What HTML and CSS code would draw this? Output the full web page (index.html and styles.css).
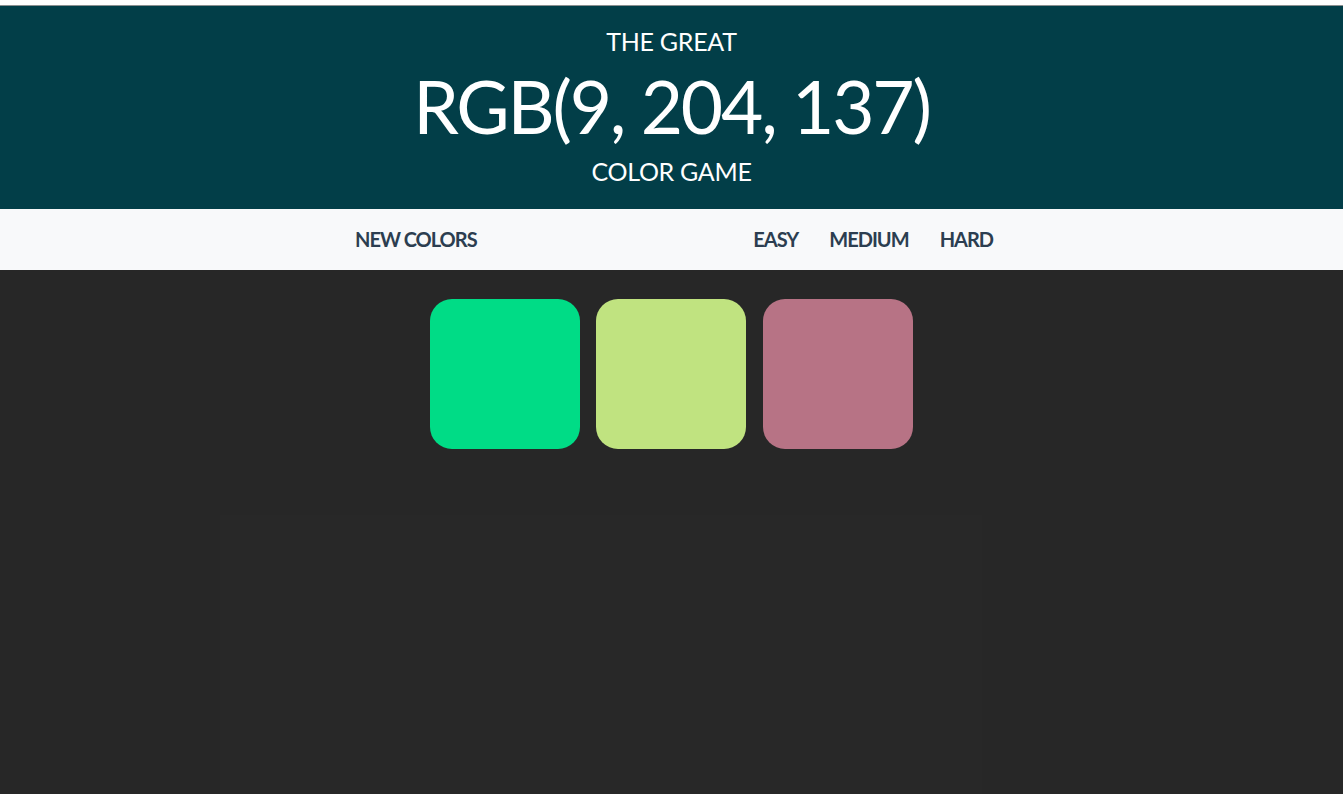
FILE: index.html
```html
<!DOCTYPE html>
<html>
<head>
<meta charset="utf-8">
<link rel="stylesheet" href="styles.css">
</head>
<body>
<div class="page">
  <header class="hero">
    <div class="small">THE GREAT</div>
    <div class="big">RGB(9, 204, 137)</div>
    <div class="small">COLOR GAME</div>
  </header>
  <nav class="bar">
    <div class="bar-inner">
      <span class="item">NEW COLORS</span>
      <div class="modes">
        <span class="item">EASY</span>
        <span class="item">MEDIUM</span>
        <span class="item">HARD</span>
      </div>
    </div>
  </nav>
  <main class="board">
    <div class="squares">
      <div class="sq sq1"></div>
      <div class="sq sq2"></div>
      <div class="sq sq3"></div>
    </div>
    <div class="ghost"></div>
  </main>
</div>
</body>
</html>
```
FILE: styles.css
```css
html, body {
  margin: 0;
  padding: 0;
  height: 100%;
}
body {
  background: #ffffff;
  font-family: "Lato", "Noto Sans", sans-serif;
  overflow: hidden;
}
.page {
  padding-top: 5px;
  min-height: 100%;
  display: flex;
  flex-direction: column;
  box-sizing: border-box;
}
.hero {
  background: #023e48;
  color: #ffffff;
  text-align: center;
  height: 204px;
  display: flex;
  flex-direction: column;
  align-items: center;
  justify-content: center;
  border-top: 1px solid #8a8f90;
  box-sizing: border-box;
  padding-bottom: 4px;
}
.small {
  font-size: 25px;
  line-height: 30px;
  letter-spacing: -0.3px;
}
.big {
  font-size: 73px;
  line-height: 100px;
  letter-spacing: -2.2px;
}
.bar {
  background: #f8f9fa;
  height: 61px;
  display: flex;
  align-items: center;
  padding-left: 5px;
  padding-bottom: 2px;
  box-sizing: border-box;
}
.bar-inner {
  width: 638px;
  margin: 0 auto;
  display: flex;
  justify-content: space-between;
  align-items: center;
}
.modes {
  display: flex;
  gap: 31px;
}
.item {
  font-weight: 700;
  font-size: 20px;
  letter-spacing: -1px;
  color: #2c3e50;
}
.board {
  flex: 1;
  background: #272727;
  display: flex;
  flex-direction: column;
}
.squares {
  display: flex;
  justify-content: center;
  gap: 16.5px;
  padding-top: 29px;
  padding-right: 1px;
}
.sq {
  width: 150px;
  height: 150px;
  border-radius: 22px;
}
.sq1 { background: #00dc86; }
.sq2 { background: #c0e380; }
.sq3 { background: #b77385; }
.ghost {
  flex: 1;
  margin: 66px 0 0 220px;
  width: 762px;
  background: #282828;
}
```
